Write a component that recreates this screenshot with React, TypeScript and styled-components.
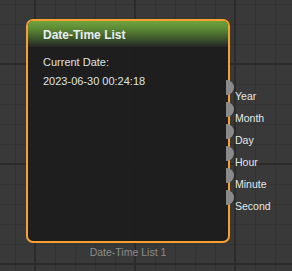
import React from 'react'
import styled, { createGlobalStyle } from 'styled-components'

const GlobalStyle = createGlobalStyle`
  html, body, #root {
    margin: 0;
    padding: 0;
    width: 100%;
    height: 100%;
  }
  body {
    font-family: "Liberation Sans", Arial, sans-serif;
    overflow: hidden;
  }
`

const Canvas = styled.div`
  position: relative;
  width: 100%;
  height: 100%;
  background-color: #393939;
  background-image:
    linear-gradient(to right, #2b2b2b 2px, transparent 2px),
    linear-gradient(to bottom, #2b2b2b 2px, transparent 2px),
    linear-gradient(to right, #333333 1px, transparent 1px),
    linear-gradient(to bottom, #333333 1px, transparent 1px);
  background-size: 100px 100%, 100% 100px, 20px 100%, 100% 20px;
  background-position: 34px 0, 0 63px, 15px 0, 0 4px;
`

// node place on the graph canvas
const NodeWrap = styled.div<{ x: number; y: number }>`
  position: absolute;
  left: ${(p) => p.x}px;
  top: ${(p) => p.y}px;
  width: 204px;
  display: flex;
  flex-direction: column;
  align-items: center;
`

const NodeBox = styled.div`
  position: relative;
  box-sizing: border-box;
  width: 100%;
  height: 224px;
  border: 2px solid #f7a02f;
  border-radius: 7px;
  background: rgba(28, 28, 28, 0.9);
  display: flex;
  flex-direction: column;
`

const Header = styled.div`
  height: 26px;
  padding: 1px 0 0 15px;
  box-sizing: border-box;
  display: flex;
  align-items: center;
  border-radius: 5px 5px 0 0;
  background: linear-gradient(to bottom, #72a33e 0%, #5c8a35 30%, #3f5a2b 65%, #262626 100%);
  color: #e9eef2;
  font-size: 12px;
  font-weight: bold;
`

const Body = styled.div`
  padding: 6px 0 0 15px;
  display: flex;
  flex-direction: column;
`

const Line = styled.div`
  font-size: 11px;
  line-height: 19px;
  color: #dfe3e6;
`

const Outputs = styled.div`
  position: absolute;
  left: calc(100% - 2px);
  top: 58px;
  display: flex;
  flex-direction: column;
`

const OutputRow = styled.div`
  height: 22px;
  display: flex;
  align-items: flex-start;
`

const Port = styled.div`
  width: 8px;
  height: 15px;
  margin-top: 1px;
  border-radius: 0 8px 8px 0;
  background: #8a8a8a;
`

const PortLabel = styled.span`
  margin-left: 1px;
  padding-top: 11px;
  font-size: 10.5px;
  line-height: 12px;
  color: #e4e8ea;
  white-space: nowrap;
`

const Caption = styled.div`
  margin-top: 2px;
  font-size: 10.5px;
  line-height: 14px;
  color: #8c8c8c;
`

const outputs = ['Year', 'Month', 'Day', 'Hour', 'Minute', 'Second']

const App = () => {
  return (
    <>
      <GlobalStyle />
      <Canvas>
        <NodeWrap x={26} y={19}>
          <NodeBox>
            <Header>Date-Time List</Header>
            <Body>
              <Line>Current Date:</Line>
              <Line>2023-06-30 00:24:18</Line>
            </Body>
            <Outputs>
              {outputs.map((name) => (
                <OutputRow key={name}>
                  <Port />
                  <PortLabel>{name}</PortLabel>
                </OutputRow>
              ))}
            </Outputs>
          </NodeBox>
          <Caption>Date-Time List 1</Caption>
        </NodeWrap>
      </Canvas>
    </>
  )
}

export default App
